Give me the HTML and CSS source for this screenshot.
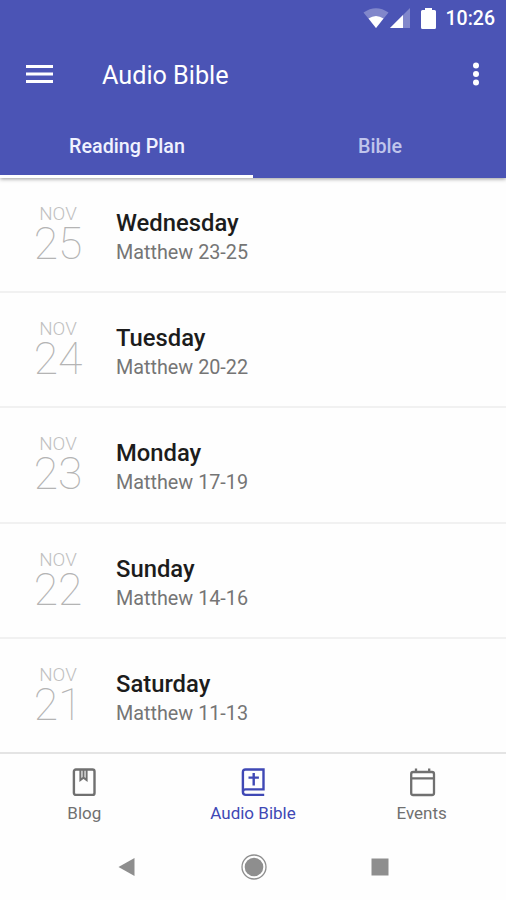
FILE: index.html
```html
<!DOCTYPE html>
<html lang="en">
<head>
    <meta charset="UTF-8">
    <meta name="viewport" content="width=device-width, initial-scale=1.0">
    <title>Audio Bible</title>
    <link rel="stylesheet" href="styles.css">
</head>
<body>
    <div class="phone">
        <header class="header">
            <div class="status-bar">
                <svg class="wifi" width="26" height="21" viewBox="0 0 26 21">
                    <path d="M0.5 4.5Q13 -4 25.5 4.5L13 20Z" fill="#fff" fill-opacity="0.3"/>
                    <path d="M5.5 10.6Q13 5.4 20.5 10.6L13 20Z" fill="#fff"/>
                </svg>
                <svg class="signal" width="20" height="20" viewBox="0 0 20 20">
                    <path d="M0 20L20 0V20Z" fill="#fff" fill-opacity="0.3"/>
                    <path d="M0 20L13 7V20Z" fill="#fff"/>
                </svg>
                <svg class="battery" width="15" height="21" viewBox="0 0 15 21">
                    <path d="M4 0H11V2H13.5Q15 2 15 3.5V19.5Q15 21 13.5 21H1.5Q0 21 0 19.5V3.5Q0 2 1.5 2H4Z" fill="#fff"/>
                </svg>
                <span class="time">10:26</span>
            </div>
            <div class="toolbar">
                <svg class="menu" width="27" height="20" viewBox="0 0 27 20">
                    <path d="M0 2.5H27M0 10H27M0 17.5H27" stroke="#fff" stroke-width="3"/>
                </svg>
                <h1>Audio Bible</h1>
                <svg class="more" width="8" height="24" viewBox="0 0 8 24">
                    <circle cx="4" cy="3.5" r="3" fill="#fff"/>
                    <circle cx="4" cy="12" r="3" fill="#fff"/>
                    <circle cx="4" cy="20.5" r="3" fill="#fff"/>
                </svg>
            </div>
            <div class="tabs">
                <div class="tab active">Reading Plan</div>
                <div class="tab">Bible</div>
            </div>
        </header>

        <main class="list">
            <div class="row">
                <div class="date"><span class="month">NOV</span><span class="day">25</span></div>
                <div class="info"><h2>Wednesday</h2><p>Matthew 23-25</p></div>
            </div>
            <div class="row">
                <div class="date"><span class="month">NOV</span><span class="day">24</span></div>
                <div class="info"><h2>Tuesday</h2><p>Matthew 20-22</p></div>
            </div>
            <div class="row">
                <div class="date"><span class="month">NOV</span><span class="day">23</span></div>
                <div class="info"><h2>Monday</h2><p>Matthew 17-19</p></div>
            </div>
            <div class="row">
                <div class="date"><span class="month">NOV</span><span class="day">22</span></div>
                <div class="info"><h2>Sunday</h2><p>Matthew 14-16</p></div>
            </div>
            <div class="row">
                <div class="date"><span class="month">NOV</span><span class="day">21</span></div>
                <div class="info"><h2>Saturday</h2><p>Matthew 11-13</p></div>
            </div>
        </main>

        <nav class="bottom-nav">
            <div class="nav-item">
                <svg width="28" height="30" viewBox="0 0 28 30" fill="none" stroke="currentColor" stroke-width="2.4">
                    <rect x="3.9" y="2.5" width="20.6" height="25.4" rx="2"/>
                    <path d="M10.4 2.5V13L13.5 10.6L16.6 13V2.5M13.5 2.5V10.5" stroke-width="2"/>
                </svg>
                <span>Blog</span>
            </div>
            <div class="nav-item active">
                <svg width="28" height="30" viewBox="0 0 28 30" fill="none" stroke="currentColor" stroke-width="2.4">
                    <path d="M25.2 27.9H6.8Q3.9 27.9 3.9 25V5.2Q3.9 2.5 6.6 2.5H24.5V22.4H6.6Q3.9 22.4 3.9 25"/>
                    <path d="M14.7 6V18.6M9.5 10.6H19.9" stroke-width="2.4"/>
                </svg>
                <span>Audio Bible</span>
            </div>
            <div class="nav-item">
                <svg width="28" height="30" viewBox="0 0 28 30" fill="none" stroke="currentColor" stroke-width="2.3">
                    <rect x="3.2" y="5" width="22.8" height="23" rx="2"/>
                    <path d="M3.2 11.4H26M8 1.5V5M21.2 1.5V5"/>
                </svg>
                <span>Events</span>
            </div>
        </nav>

        <div class="system-nav">
            <svg width="26" height="26" viewBox="0 0 26 26">
                <path d="M4.5 13L20.5 4V22Z" fill="#8e8e8e"/>
            </svg>
            <svg width="26" height="26" viewBox="0 0 26 26">
                <circle cx="13" cy="13" r="12" fill="none" stroke="#8e8e8e" stroke-width="1.3"/>
                <circle cx="13" cy="13" r="9.3" fill="#8e8e8e"/>
            </svg>
            <svg width="26" height="26" viewBox="0 0 26 26">
                <rect x="4.5" y="4.5" width="17" height="17" fill="#8e8e8e"/>
            </svg>
        </div>
    </div>
</body>
</html>
```

FILE: styles.css
```css
* {
    box-sizing: border-box;
}
body {
    font-family: Roboto, "Liberation Sans", sans-serif;
    background-color: #fefefe;
    margin: 0;
}
h1, h2, p {
    margin: 0;
}
svg {
    display: block;
    flex-shrink: 0;
}
.phone {
    height: 900px;
    display: flex;
    flex-direction: column;
    overflow: hidden;
}
.header {
    height: 178px;
    flex-shrink: 0;
    display: flex;
    flex-direction: column;
    background-color: #4b54b5;
    color: #fff;
    box-shadow: 0 1px 4px rgba(0, 0, 0, 0.4);
}
.status-bar {
    height: 36px;
    padding-right: 11px;
    display: flex;
    justify-content: flex-end;
    align-items: center;
}
.signal {
    margin-left: 1px;
}
.battery {
    margin-left: 11px;
}
.time {
    margin-left: 10px;
    padding-top: 2px;
    font-size: 19.5px;
    font-weight: 500;
    line-height: 36px;
}
.toolbar {
    height: 76px;
    padding: 0 26px;
    display: flex;
    align-items: center;
}
.menu {
    margin-bottom: 1px;
}
h1 {
    flex: 1;
    margin-left: 49px;
    padding-top: 3px;
    font-size: 25.2px;
    font-weight: 400;
    line-height: 30px;
}
.tabs {
    height: 66px;
    display: flex;
}
.tab {
    flex: 1;
    padding-left: 1px;
    font-size: 19.7px;
    font-weight: 500;
    line-height: 70px;
    text-align: center;
    color: #c0c5ec;
}
.tab.active {
    height: 66px;
    color: #f0f2ff;
    border-bottom: 3px solid #fff;
}
.list {
    height: 576px;
    flex-shrink: 0;
    display: flex;
    flex-direction: column;
}
.row {
    flex: 1;
    padding-top: 26px;
    display: flex;
    border-bottom: 2px solid #f1f1f1;
}
.row:last-child {
    border-bottom-color: #e4e4e4;
}
.date {
    width: 116px;
    display: flex;
    flex-direction: column;
    align-items: center;
    color: #c0c0c0;
}
.month {
    font-size: 18.8px;
    font-weight: 300;
    line-height: 20px;
}
.day {
    font-size: 44.5px;
    font-weight: 100;
    line-height: 40px;
    color: #b4b4b4;
}
h2 {
    font-size: 23.8px;
    font-weight: 500;
    line-height: 38px;
    color: #1c1c1c;
}
.info p {
    font-size: 19.8px;
    line-height: 22px;
    color: #757575;
}
.bottom-nav {
    height: 82px;
    padding-top: 13px;
    display: flex;
}
.nav-item {
    flex: 1;
    display: flex;
    flex-direction: column;
    align-items: center;
    font-size: 17px;
    line-height: 20px;
    color: #707070;
}
.nav-item span {
    margin-top: 6px;
}
.nav-item.active {
    color: #3f48b5;
}
.system-nav {
    padding: 18px 113px 0 114px;
    display: flex;
    justify-content: space-between;
}
```
